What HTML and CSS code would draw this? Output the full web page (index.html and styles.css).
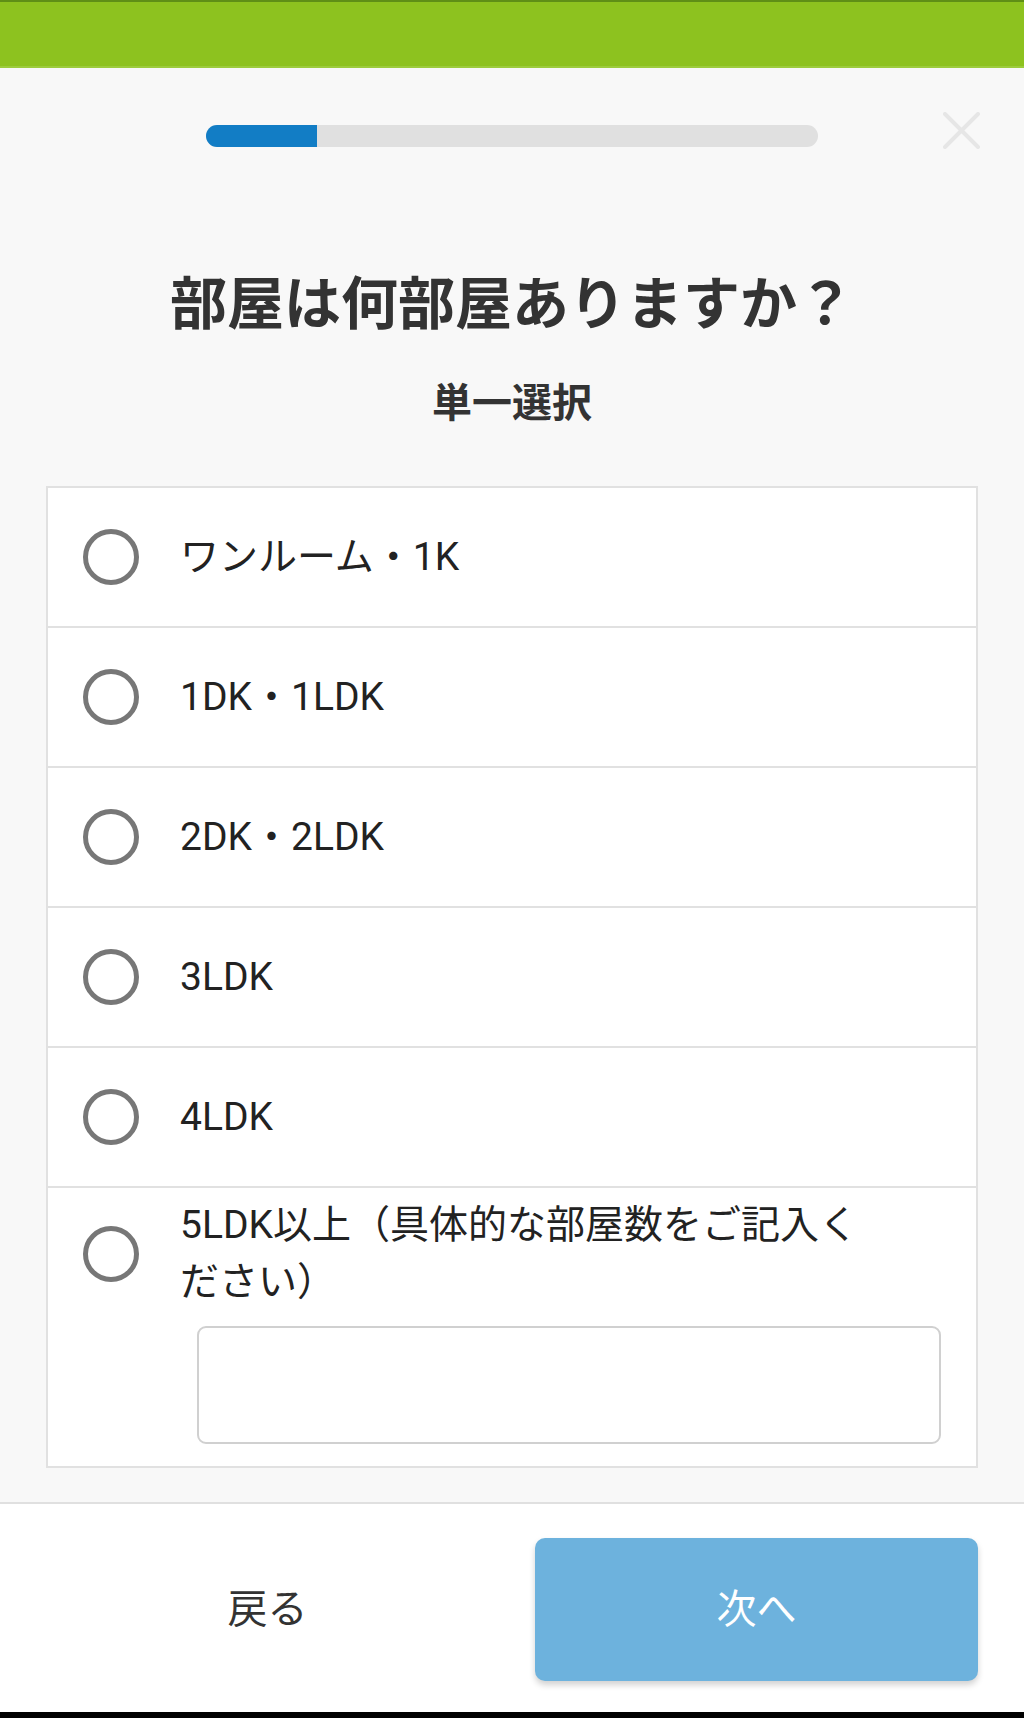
FILE: index.html
```html
<!DOCTYPE html>
<html lang="ja">
<head>
<meta charset="utf-8">
<title>部屋は何部屋ありますか？</title>
<link rel="stylesheet" href="styles.css">
</head>
<body>
<div class="page">
  <header class="topbar"></header>
  <main class="main">
    <div class="progress-row">
      <div class="progress"><div class="progress-fill"></div></div>
      <button class="close" aria-label="閉じる">
        <svg width="37" height="37" viewBox="0 0 37 37"><path d="M2 2 L35 35 M35 2 L2 35" stroke="#e6e6e6" stroke-width="4" stroke-linecap="round" fill="none"/></svg>
      </button>
    </div>
    <h1 class="title">部屋は何部屋ありますか？</h1>
    <p class="subtitle">単一選択</p>
    <ul class="options">
      <li class="option"><span class="radio"></span><span class="label">ワンルーム・1K</span></li>
      <li class="option"><span class="radio"></span><span class="label">1DK・1LDK</span></li>
      <li class="option"><span class="radio"></span><span class="label">2DK・2LDK</span></li>
      <li class="option"><span class="radio"></span><span class="label">3LDK</span></li>
      <li class="option"><span class="radio"></span><span class="label">4LDK</span></li>
      <li class="option option-other">
        <span class="radio"></span>
        <span class="label label-wrap">5LDK以上（具体的な部屋数をご記入ください）</span>
        <input class="other-input" type="text">
      </li>
    </ul>
  </main>
  <footer class="footer">
    <div class="back">戻る</div>
    <button class="next">次へ</button>
  </footer>
  <div class="navstrip"></div>
</div>
</body>
</html>
```

FILE: styles.css
```css
* { box-sizing: border-box; }
html, body { margin: 0; padding: 0; }
body {
  background: #f8f8f8;
  font-family: Roboto, "Noto Sans CJK JP", sans-serif;
  color: #333;
}
.page {
  width: 1024px;
  height: 1718px;
  display: flex;
  flex-direction: column;
}
.topbar {
  height: 68px;
  flex: none;
  background: #8dc21f;
  border-top: 2px solid #5f8f16;
  border-bottom: 2px solid #9ccc3c;
}
.main {
  flex: 1;
  display: flex;
  flex-direction: column;
}
.progress-row {
  display: grid;
  grid-template-columns: 1fr 612px 1fr;
  align-items: start;
  padding-top: 43px;
  height: 83px;
}
.progress {
  grid-column: 2;
  margin-top: 14px;
  height: 22px;
  border-radius: 11px;
  background: #e0e0e0;
  overflow: hidden;
}
.progress-fill {
  width: 111px;
  height: 100%;
  background: #127dc5;
}
.close {
  grid-column: 3;
  justify-self: end;
  margin-right: 44px;
  margin-top: 1px;
  width: 37px;
  height: 37px;
  padding: 0;
  border: 0;
  background: none;
  display: block;
}
.close svg { display: block; }
.title {
  margin: 120px 0 0;
  text-align: center;
  font-size: 57px;
  line-height: 68px;
  font-weight: 700;
  color: #333;
}
.subtitle {
  margin: 41px 0 0;
  text-align: center;
  font-size: 40px;
  line-height: 48px;
  font-weight: 700;
  color: #333;
}
.options {
  list-style: none;
  margin: 58px 46px 0;
  padding: 0;
  background: #fff;
  border: 2px solid #e1e1e1;
}
.option {
  display: grid;
  grid-template-columns: 56px 1fr;
  column-gap: 41px;
  align-items: center;
  min-height: 140px;
  padding: 0 35px 0 35px;
  border-bottom: 2px solid #e1e1e1;
}
.option:last-child { border-bottom: 0; }
.radio {
  width: 56px;
  height: 56px;
  border: 5px solid #777;
  border-radius: 50%;
  display: block;
}
.label {
  font-size: 39px;
  line-height: 57px;
  color: #222;
}
.option-other {
  padding-top: 9px;
  padding-bottom: 22px;
  align-items: center;
}
.label-wrap {
  padding-right: 68px;
}
.other-input {
  grid-column: 2;
  margin: 15px 0 0 17px;
  height: 118px;
  border: 2px solid #d0d0d0;
  border-radius: 9px;
  background: #fff;
  font-size: 36px;
}
.footer {
  flex: none;
  height: 210px;
  background: #fff;
  border-top: 2px solid #e0e0e0;
  display: flex;
  align-items: flex-start;
  padding-top: 34px;
}
.back {
  flex: 1;
  height: 143px;
  padding-bottom: 8px;
  display: flex;
  align-items: center;
  justify-content: center;
  font-size: 40px;
  color: #333;
}
.next {
  width: 443px;
  height: 143px;
  margin-right: 46px;
  padding: 0 0 8px;
  border: 0;
  border-radius: 10px;
  background: #6db2dd;
  color: #fff;
  font-family: inherit;
  font-size: 40px;
  box-shadow: 0 4px 6px rgba(0, 0, 0, 0.18);
}
.navstrip {
  flex: none;
  height: 6px;
  background: #000;
}
```
